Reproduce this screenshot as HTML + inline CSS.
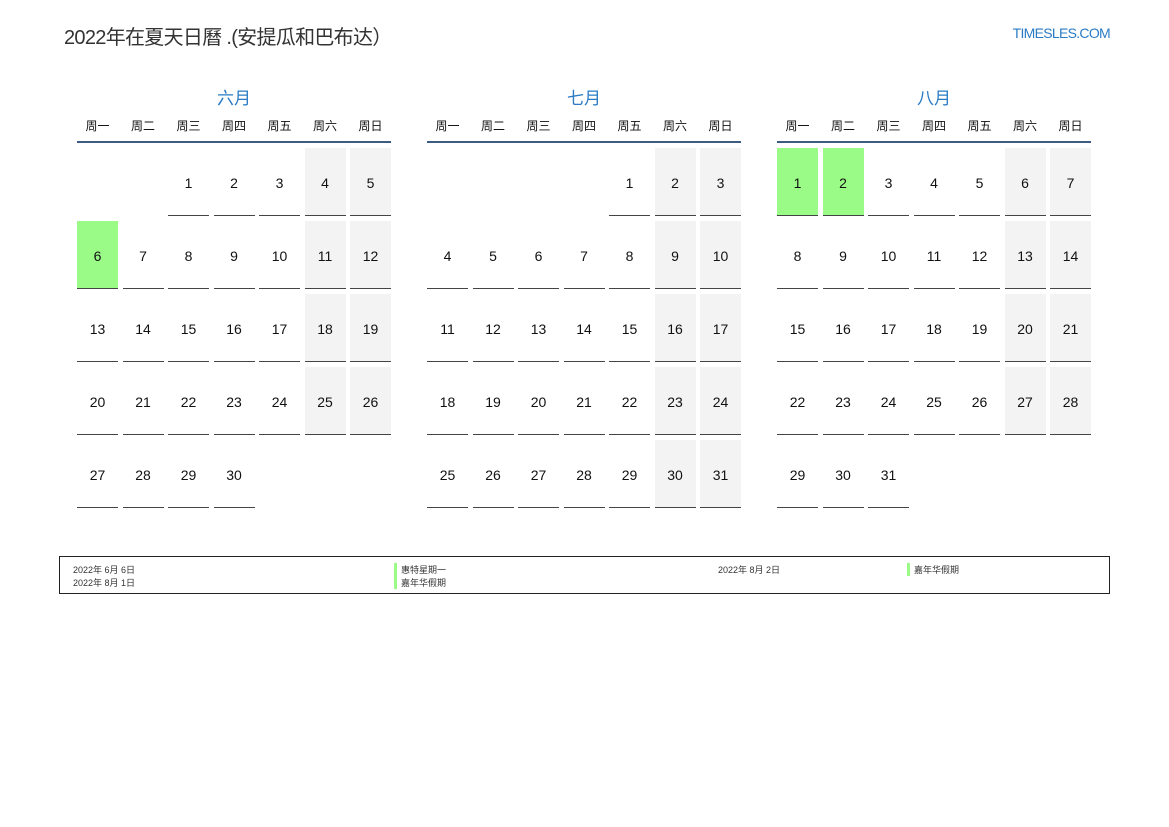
<!DOCTYPE html>
<html><head><meta charset="utf-8"><style>
*{margin:0;padding:0;box-sizing:border-box}
body{width:1169px;height:827px;background:#fff;font-family:"Liberation Sans","Noto Sans CJK SC",sans-serif;position:relative;overflow:hidden;color:#111}
.t{position:absolute;left:64px;top:21px;font-size:20px;color:#333;letter-spacing:-0.7px}
.logo{position:absolute;right:59px;top:25px;font-size:14px;color:#2a7bc4;letter-spacing:-0.7px}
.m{position:absolute;top:84px;width:314px}
.mt{text-align:center;color:#2a7bc4;font-size:17px;height:26px}
.wd{display:grid;grid-template-columns:repeat(7,41px);column-gap:4.5px;font-size:12px;text-align:center;height:33px;border-bottom:2px solid #3d5a80;line-height:33px}
.g{display:grid;grid-template-columns:repeat(7,41px);column-gap:4.5px;row-gap:5px;margin-top:5px}
.g div{height:68px;line-height:70px;text-align:center;font-size:14px;border-bottom:1px solid #444}
.g .e{border:none}
.g .w{background:#f3f3f3}
.g .h{background:#9afb86}
.leg{position:absolute;left:59px;top:556px;width:1051px;height:38px;border:1px solid #222;font-size:9px;color:#333}
.leg span{position:absolute}
.bar{border-left:3px solid #9afb86;padding-left:4px}
</style></head><body>
<div class="t">2022年在夏天日曆 .(安提瓜和巴布达）</div>
<div class="logo">TIMESLES.COM</div>

<div class="m" style="left:77px"><div class="mt">六月</div>
<div class="wd"><span>周一</span><span>周二</span><span>周三</span><span>周四</span><span>周五</span><span>周六</span><span>周日</span></div>
<div class="g">
<div class="e"></div><div class="e"></div><div>1</div><div>2</div><div>3</div><div class="w">4</div><div class="w">5</div>
<div class="h">6</div><div>7</div><div>8</div><div>9</div><div>10</div><div class="w">11</div><div class="w">12</div>
<div>13</div><div>14</div><div>15</div><div>16</div><div>17</div><div class="w">18</div><div class="w">19</div>
<div>20</div><div>21</div><div>22</div><div>23</div><div>24</div><div class="w">25</div><div class="w">26</div>
<div>27</div><div>28</div><div>29</div><div>30</div><div class="e"></div><div class="e"></div><div class="e"></div>
</div></div>

<div class="m" style="left:427px"><div class="mt">七月</div>
<div class="wd"><span>周一</span><span>周二</span><span>周三</span><span>周四</span><span>周五</span><span>周六</span><span>周日</span></div>
<div class="g">
<div class="e"></div><div class="e"></div><div class="e"></div><div class="e"></div><div>1</div><div class="w">2</div><div class="w">3</div>
<div>4</div><div>5</div><div>6</div><div>7</div><div>8</div><div class="w">9</div><div class="w">10</div>
<div>11</div><div>12</div><div>13</div><div>14</div><div>15</div><div class="w">16</div><div class="w">17</div>
<div>18</div><div>19</div><div>20</div><div>21</div><div>22</div><div class="w">23</div><div class="w">24</div>
<div>25</div><div>26</div><div>27</div><div>28</div><div>29</div><div class="w">30</div><div class="w">31</div>
</div></div>

<div class="m" style="left:777px"><div class="mt">八月</div>
<div class="wd"><span>周一</span><span>周二</span><span>周三</span><span>周四</span><span>周五</span><span>周六</span><span>周日</span></div>
<div class="g">
<div class="h">1</div><div class="h">2</div><div>3</div><div>4</div><div>5</div><div class="w">6</div><div class="w">7</div>
<div>8</div><div>9</div><div>10</div><div>11</div><div>12</div><div class="w">13</div><div class="w">14</div>
<div>15</div><div>16</div><div>17</div><div>18</div><div>19</div><div class="w">20</div><div class="w">21</div>
<div>22</div><div>23</div><div>24</div><div>25</div><div>26</div><div class="w">27</div><div class="w">28</div>
<div>29</div><div>30</div><div>31</div><div class="e"></div><div class="e"></div><div class="e"></div><div class="e"></div>
</div></div>

<div class="leg">
<span style="left:13px;top:6px">2022年 6月 6日</span>
<span style="left:13px;top:19px">2022年 8月 1日</span>
<span class="bar" style="left:334px;top:6px">惠特星期一</span>
<span class="bar" style="left:334px;top:19px">嘉年华假期</span>
<span style="left:658px;top:6px">2022年 8月 2日</span>
<span class="bar" style="left:847px;top:6px">嘉年华假期</span>
</div>
</body></html>
